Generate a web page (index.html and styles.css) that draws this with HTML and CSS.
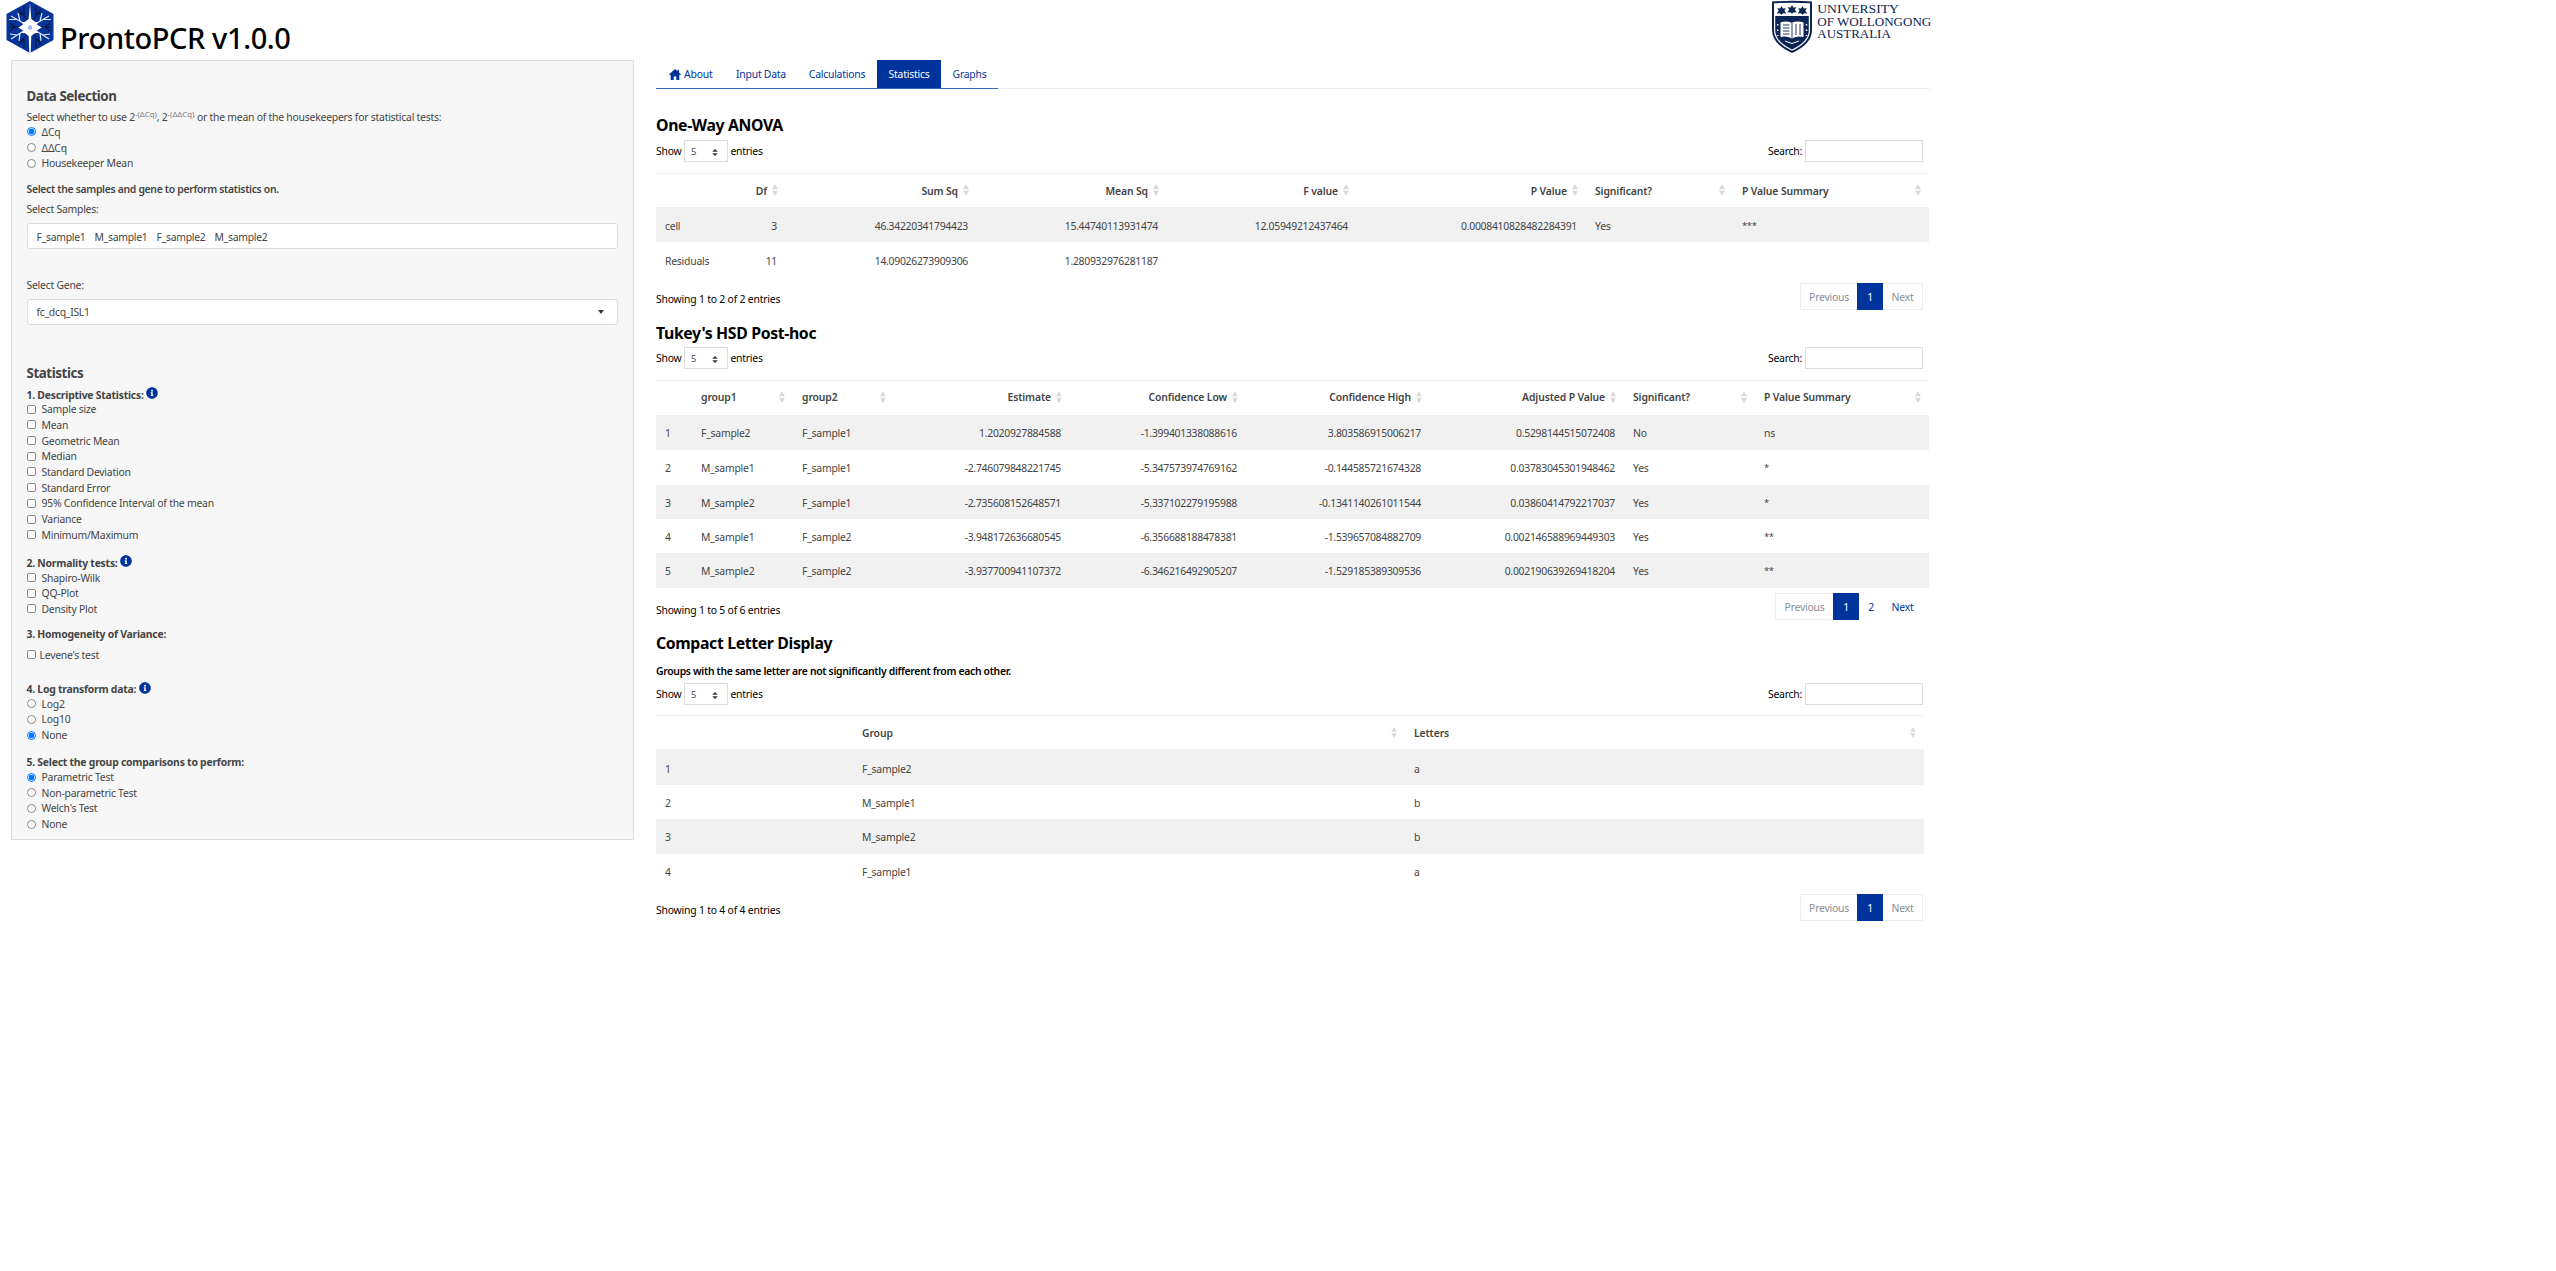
FILE: index.html
```html
<!DOCTYPE html>
<html lang="en">
<head>
<meta charset="utf-8">
<title>ProntoPCR v1.0.0</title>
<link rel="stylesheet" href="styles.css">
</head>
<body>
<svg class="defs" width="0" height="0">
  <symbol id="info" viewBox="0 0 512 512"><path fill="#00349c" d="M256 8C119 8 8 119 8 256s111 248 248 248 248-111 248-248S393 8 256 8zm0 110a42 42 0 1 1 0 84 42 42 0 0 1 0-84zm56 254a12 12 0 0 1-12 12h-88a12 12 0 0 1-12-12v-24a12 12 0 0 1 12-12h12v-64h-12a12 12 0 0 1-12-12v-24a12 12 0 0 1 12-12h64a12 12 0 0 1 12 12v100h12a12 12 0 0 1 12 12z"/></symbol>
  <symbol id="sort" viewBox="0 0 6 12"><path fill="#dadada" d="M3 0 6 5.300H0zM0 6.700h6L3 12z"/></symbol>
  <symbol id="updown" viewBox="0 0 4 5"><path fill="#343a40" d="M2 0 0 2h4zM0 3h4L2 5z"/></symbol>
</svg>
<div class="page">
  <header class="top">
    <svg class="logo" width="48" height="54" viewBox="0 0 48 54">
      <path fill="#06349a" d="M24 1 47.5 14v26L24 53 .5 40V14z"/>
      <g fill="none" stroke="#0a1440" stroke-width="1.1">
        <path d="M21 20 13 9M17 14l-5-1M18 16V6M27 20l8-11M31 14l5-1M30 16V6M16 27H3M9 27l-5-4M9 27l-5 4M32 27h13M39 27l5-4M39 27l5 4M21 34l-8 11M17 40l-6 1M18 39v9M27 34l8 11M31 40l6 1M30 39v9"/>
      </g>
      <g fill="none" stroke="#dfe9fa" stroke-width="1.2">
        <path d="M24 27 5 16M24 27l19-11M24 27 5 39M24 27l19 12M14 21l-2-8M11 19.500H3M34 21l2-8M37 19.500h8M14 33l-1 8M11 35l-7-1M34 33l1 8M37 35l7-1"/>
      </g>
      <path fill="#fff" d="M24 3l1.300 16 4 3 3 0-1.500 2.500 5 3-5 3 1.500 2.500-3 0-4 3L24.700 53h-1.400L22.700 36l-4-3-3 0 1.500-2.500-5-3 5-3L15.700 22l3 0 4-3z"/>
      <circle cx="24" cy="27.500" r="1.700" fill="#b8cdf0" stroke="#4a78c8" stroke-width=".6"/>
    </svg>
    <h1>ProntoPCR v1.0.0</h1>
    <svg class="uow" width="162" height="54" viewBox="0 0 162 54">
      <path fill="#0b2453" d="M0 1.500Q20 .2 40 1.500V30q0 14-20 23Q0 44 0 30z"/>
      <path fill="#fff" d="M2 3.300Q20 2 38 3.300V30q0 12.500-18 20.800Q2 42.500 2 30z"/>
      <path fill="#0b2453" d="M3.200 16h33.600v14q0 11.500-16.800 19.500Q3.200 41.500 3.200 30z"/>
      <g fill="#0b2453">
        <path id="leaf" d="M9.500 6l1.300 2.600 3-.4-1.500 2.600 2 2.700-3-.2-1.800 1.500-1.800-1.500-3 .2 2-2.700-1.500-2.600 3 .4z"/>
        <use href="#leaf" x="10.500" y="-1"/><use href="#leaf" x="21"/>
      </g>
      <path fill="#fff" d="M8.500 22.500q6-2 11 .3 5.500-2.300 12-.3V37q-6-1.500-11.500 1.500Q14.500 35.500 8.500 37z"/>
      <path fill="none" stroke="#0b2453" stroke-width=".9" d="M20 23v15M11 25h6.500M11 28h6.500M11 31h6.500M11 34h6.500M24 24v11M28 24v11"/>
      <path fill="none" stroke="#fff" stroke-width="1.500" stroke-dasharray="1.500 4" d="M5.700 24v12M34.500 24v12"/>
      <path fill="none" stroke="#fff" d="M13 41l7 2.500 7-2.500"/>
      <g font-family="'Liberation Serif', serif" font-size="13.300" letter-spacing="0" fill="#0b2453">
        <text x="45.300" y="12.600" textLength="81.500" lengthAdjust="spacingAndGlyphs">UNIVERSITY</text>
        <text x="45.300" y="25.700" textLength="114" lengthAdjust="spacingAndGlyphs">OF WOLLONGONG</text>
        <text x="45.300" y="38.400" textLength="73.500" lengthAdjust="spacingAndGlyphs">AUSTRALIA</text>
      </g>
    </svg>
  </header>

  <div class="cols">
    <aside class="side">
      <h3>Data Selection</h3>
      <p class="lead">Select whether to use 2<sup>-(ΔCq)</sup>, 2<sup>-(ΔΔCq)</sup> or the mean of the housekeepers for statistical tests:</p>
      <div class="opts">
        <label><i class="radio on"></i>ΔCq</label>
        <label><i class="radio"></i>ΔΔCq</label>
        <label><i class="radio"></i>Housekeeper Mean</label>
      </div>
      <p class="strong samples">Select the samples and gene to perform statistics on.</p>
      <p class="lbl">Select Samples:</p>
      <div class="box"><span>F_sample1</span><span>M_sample1</span><span>F_sample2</span><span>M_sample2</span></div>
      <p class="lbl gene">Select Gene:</p>
      <div class="box"><span>fc_dcq_ISL1</span><i class="caret"></i></div>
      <h3 class="stats">Statistics</h3>
      <h4>1. Descriptive Statistics:<svg class="info"><use href="#info"/></svg></h4>
      <div class="opts">
        <label><i class="check"></i>Sample size</label>
        <label><i class="check"></i>Mean</label>
        <label><i class="check"></i>Geometric Mean</label>
        <label><i class="check"></i>Median</label>
        <label><i class="check"></i>Standard Deviation</label>
        <label><i class="check"></i>Standard Error</label>
        <label><i class="check"></i>95% Confidence Interval of the mean</label>
        <label><i class="check"></i>Variance</label>
        <label><i class="check"></i>Minimum/Maximum</label>
      </div>
      <h4 class="g2">2. Normality tests:<svg class="info"><use href="#info"/></svg></h4>
      <div class="opts">
        <label><i class="check"></i>Shapiro-Wilk</label>
        <label><i class="check"></i>QQ-Plot</label>
        <label><i class="check"></i>Density Plot</label>
      </div>
      <h4 class="g3">3. Homogeneity of Variance:</h4>
      <div class="opts single"><label><i class="check"></i>Levene's test</label></div>
      <h4 class="g4">4. Log transform data:<svg class="info"><use href="#info"/></svg></h4>
      <div class="opts">
        <label><i class="radio"></i>Log2</label>
        <label><i class="radio"></i>Log10</label>
        <label><i class="radio on"></i>None</label>
      </div>
      <h4 class="g5">5. Select the group comparisons to perform:</h4>
      <div class="opts last">
        <label><i class="radio on"></i>Parametric Test</label>
        <label><i class="radio"></i>Non-parametric Test</label>
        <label><i class="radio"></i>Welch's Test</label>
        <label><i class="radio"></i>None</label>
      </div>
    </aside>

    <main>
      <nav class="tabs">
        <a class="t1"><svg width="12" height="11" viewBox="0 0 12 11"><path fill="#00349c" d="M6 0 0 5.400l.8.900L1.700 5.500V11H4.700V7.400h2.600V11h3V5.500l.9.800.8-.9-2-1.800V.8H8.500v1.500z"/></svg>About</a>
        <a class="t2">Input Data</a>
        <a class="t3">Calculations</a>
        <a class="t4 active">Statistics</a>
        <a class="t5">Graphs</a>
      </nav>

      <section class="anova">
        <h2>One-Way ANOVA</h2>
        <div class="tools"><span>Show</span><span class="sel">5<svg width="6" height="7"><use href="#updown"/></svg></span><span>entries</span><span class="search">Search:</span><span class="field"></span></div>
        <table>
          <colgroup><col class="a0"><col class="a1"><col class="a2"><col class="a3"><col class="a4"><col class="a5"><col class="a6"><col class="a7"></colgroup>
          <thead><tr><th></th>
            <th class="n">Df<svg class="sort"><use href="#sort"/></svg></th>
            <th class="n">Sum Sq<svg class="sort"><use href="#sort"/></svg></th>
            <th class="n">Mean Sq<svg class="sort"><use href="#sort"/></svg></th>
            <th class="n">F value<svg class="sort"><use href="#sort"/></svg></th>
            <th class="n">P Value<svg class="sort"><use href="#sort"/></svg></th>
            <th>Significant?<svg class="sort"><use href="#sort"/></svg></th>
            <th>P Value Summary<svg class="sort"><use href="#sort"/></svg></th></tr></thead>
          <tbody>
            <tr><td>cell</td><td class="n">3</td><td class="n">46.34220341794423</td><td class="n">15.44740113931474</td><td class="n">12.05949212437464</td><td class="n">0.0008410828482284391</td><td>Yes</td><td class="stars">***</td></tr>
            <tr><td>Residuals</td><td class="n">11</td><td class="n">14.09026273909306</td><td class="n">1.280932976281187</td><td></td><td></td><td></td><td></td></tr>
          </tbody>
        </table>
        <div class="foot"><span>Showing 1 to 2 of 2 entries</span><div class="pager"><b class="prev">Previous</b><b class="cur">1</b><b class="next">Next</b></div></div>
      </section>

      <section class="tukey">
        <h2>Tukey's HSD Post-hoc</h2>
        <div class="tools"><span>Show</span><span class="sel">5<svg width="6" height="7"><use href="#updown"/></svg></span><span>entries</span><span class="search">Search:</span><span class="field"></span></div>
        <table>
          <colgroup><col class="b0"><col class="b1"><col class="b2"><col class="b3"><col class="b4"><col class="b5"><col class="b6"><col class="b7"><col class="b8"></colgroup>
          <thead><tr><th></th>
            <th>group1<svg class="sort"><use href="#sort"/></svg></th>
            <th>group2<svg class="sort"><use href="#sort"/></svg></th>
            <th class="n">Estimate<svg class="sort"><use href="#sort"/></svg></th>
            <th class="n">Confidence Low<svg class="sort"><use href="#sort"/></svg></th>
            <th class="n">Confidence High<svg class="sort"><use href="#sort"/></svg></th>
            <th class="n">Adjusted P Value<svg class="sort"><use href="#sort"/></svg></th>
            <th>Significant?<svg class="sort"><use href="#sort"/></svg></th>
            <th>P Value Summary<svg class="sort"><use href="#sort"/></svg></th></tr></thead>
          <tbody>
            <tr><td>1</td><td>F_sample2</td><td>F_sample1</td><td class="n">1.2020927884588</td><td class="n">-1.399401338088616</td><td class="n">3.803586915006217</td><td class="n">0.5298144515072408</td><td>No</td><td>ns</td></tr>
            <tr><td>2</td><td>M_sample1</td><td>F_sample1</td><td class="n">-2.746079848221745</td><td class="n">-5.347573974769162</td><td class="n">-0.144585721674328</td><td class="n">0.03783045301948462</td><td>Yes</td><td class="stars">*</td></tr>
            <tr><td>3</td><td>M_sample2</td><td>F_sample1</td><td class="n">-2.735608152648571</td><td class="n">-5.337102279195988</td><td class="n">-0.1341140261011544</td><td class="n">0.03860414792217037</td><td>Yes</td><td class="stars">*</td></tr>
            <tr><td>4</td><td>M_sample1</td><td>F_sample2</td><td class="n">-3.948172636680545</td><td class="n">-6.356688188478381</td><td class="n">-1.539657084882709</td><td class="n">0.002146588969449303</td><td>Yes</td><td class="stars">**</td></tr>
            <tr><td>5</td><td>M_sample2</td><td>F_sample2</td><td class="n">-3.937700941107372</td><td class="n">-6.346216492905207</td><td class="n">-1.529185389309536</td><td class="n">0.002190639269418204</td><td>Yes</td><td class="stars">**</td></tr>
          </tbody>
        </table>
        <div class="foot"><span>Showing 1 to 5 of 6 entries</span><div class="pager"><b class="prev wide">Previous</b><b class="cur">1</b><b class="pg">2</b><b class="next link">Next</b></div></div>
      </section>

      <section class="cld">
        <h2>Compact Letter Display</h2>
        <p class="strong note">Groups with the same letter are not significantly different from each other.</p>
        <div class="tools"><span>Show</span><span class="sel">5<svg width="6" height="7"><use href="#updown"/></svg></span><span>entries</span><span class="search">Search:</span><span class="field"></span></div>
        <table>
          <colgroup><col class="c0"><col class="c1"><col class="c2"></colgroup>
          <thead><tr><th></th>
            <th>Group<svg class="sort tight"><use href="#sort"/></svg></th>
            <th>Letters<svg class="sort tight"><use href="#sort"/></svg></th></tr></thead>
          <tbody>
            <tr><td>1</td><td>F_sample2</td><td>a</td></tr>
            <tr><td>2</td><td>M_sample1</td><td>b</td></tr>
            <tr><td>3</td><td>M_sample2</td><td>b</td></tr>
            <tr><td>4</td><td>F_sample1</td><td>a</td></tr>
          </tbody>
        </table>
        <div class="foot"><span>Showing 1 to 4 of 4 entries</span><div class="pager"><b class="prev">Previous</b><b class="cur">1</b><b class="next">Next</b></div></div>
      </section>
    </main>
  </div>
</div>
</body>
</html>
```
FILE: styles.css
```css
* { box-sizing: border-box; }
body { margin: 0; background: #fff; color: #000; font: 10.4px/16px "Noto Sans", "Open Sans", sans-serif; letter-spacing: -0.23px; }
h1, h2, h3, h4, p { margin: 0; }
svg { display: block; flex: none; }
.defs { position: absolute; }
.page { width: 1934px; }

.top { display: flex; align-items: flex-start; height: 60px; padding-left: 6px; }
.uow { overflow: visible; }
h1 { font-size: 29px; font-weight: 500; line-height: 38px; letter-spacing: -0.4px; margin: 19px auto 0 6px; }

.cols { display: flex; align-items: flex-start; }
.side { width: 623px; height: 780px; margin-left: 11px; padding: 26px 15px 0 14.500px; background: #f7f7f7; border: 1px solid #ddd; color: #444; }
h3 { font-size: 13.300px; font-weight: 700; line-height: 18px; letter-spacing: -0.4px; }
h4 { display: flex; align-items: center; height: 16px; font-size: 10.400px; font-weight: 700; line-height: 16px; }
.info { width: 12px; height: 12px; margin: -3px 0 0 2.500px; }
.lead { margin-top: 4px; height: 16px; white-space: nowrap; }
sup { font-size: 7.800px; line-height: 0; vertical-align: 4px; color: #777; letter-spacing: 0; }
.opts label { display: flex; align-items: center; height: 15.700px; }
.lead + .opts { margin-top: -1px; }
.radio, .check { flex: none; width: 9px; height: 9px; margin-right: 6px; background: #fff; border: 1px solid #888; }
.radio { border-radius: 50%; }
.check { border-radius: 2px; }
.radio.on { border-color: #0075ff; background: radial-gradient(circle, #0075ff 2.500px, #fff 3.200px); }
.strong { font-weight: 600; letter-spacing: -0.31px; }
.samples { margin-top: 10px; }
.lbl { margin-top: 4px; }
.gene { margin-top: 27.500px; }
.box { display: flex; align-items: center; height: 26px; margin-top: 6px; padding: 1px 13px 0 9px; background: #fff; border: 1px solid #ddd; border-radius: 3px; }
.box span { margin-right: 9px; letter-spacing: -0.27px; }
.caret { margin-left: auto; border: solid transparent; border-width: 4px 3.500px 0; border-top-color: #343a40; }
.stats { margin-top: 39px; }
.stats + h4 { margin-top: 5px; }
h4 + .opts { margin-top: -1.200px; }
.g2 { margin-top: 12.400px; }
.g3 { margin-top: 9.500px; }
.g3 + .single { margin-top: 5px; }
.single .check { margin: -2px 4px 0 0; }
.g4 { margin-top: 18px; }
.g5 { margin-top: 11.300px; }
.g5 + .last { margin-top: -1px; }

main { width: 1274px; margin-left: 22px; }
.tabs { display: flex; height: 29px; border-bottom: 1px solid #eee; }
.tabs a { display: flex; align-items: center; justify-content: center; height: 29px; color: #00349c; border-bottom: 1px solid #3e66b8; }
.tabs svg { margin-right: 3.500px; }
.tabs .active { background: #00349c; color: #fff; }
.t1 { width: 69px; } .t2 { width: 72px; } .t3 { width: 80px; } .t4 { width: 64px; } .t5 { width: 57px; }

section { width: 1273px; }
.anova { padding-top: 26px; }
.tukey { padding-top: 13px; }
.cld { padding-top: 12px; }
h2 { font-size: 15.800px; font-weight: 700; line-height: 20px; letter-spacing: -0.35px; margin-bottom: 4px; }
.anova h2 { margin-bottom: 5px; }
.note { margin: 10px 0 4px; }
.tools { display: flex; align-items: center; height: 22px; margin-bottom: 11px; padding-right: 6px; }
.sel { display: flex; align-items: center; width: 44px; height: 22px; margin: 0 2.500px; padding: 2px 9px 0 6px; border: 1px solid #ddd; color: #495057; font-size: 9.500px; }
.sel svg { margin-left: auto; }
.search { margin-left: auto; }
.field { width: 118px; height: 22px; margin-left: 3px; border: 1px solid #ddd; }

table { width: 100%; table-layout: fixed; border-collapse: separate; border-spacing: 0; color: #444; }
th { position: relative; height: 34px; padding: 0 19px 0 9px; border-top: 1px solid #f1f1f1; text-align: left; font-weight: 600; letter-spacing: -0.12px; }
td { height: 35px; padding: 2px 9px 0; text-align: left; }
th.n, td.n { text-align: right; }
td.n { letter-spacing: -0.27px; }
td.stars { font-size: 9.500px; letter-spacing: -0.4px; }
tbody tr:nth-child(odd) { background: #f1f1f1; }
.sort { position: absolute; right: 8px; top: 10px; width: 6px; height: 12px; }
.sort.tight { height: 11px; top: 11px; }
.tukey th { height: 35px; padding-bottom: 2px; }
.tukey td { padding-top: 1px; }
.tukey tr:nth-child(3) td, .tukey tr:nth-child(4) td { height: 34px; }
.cld .tools { margin-bottom: 10px; }
.cld table { width: 1268px; }
.cld th { padding-top: 1px; }
.cld td { padding-top: 1px; }
.cld tbody tr:nth-child(2) td, .cld tbody tr:nth-child(4) td { height: 34px; }
.cld tbody tr:first-child td { height: 36px; padding-top: 3px; }
.a0 { width: 61px; } .a1 { width: 69px; } .a2 { width: 191px; } .a3 { width: 190px; } .a4 { width: 190px; } .a5 { width: 229px; } .a6 { width: 147px; }
.b0 { width: 36px; } .b1 { width: 101px; } .b2 { width: 101px; } .b3 { width: 176px; } .b4 { width: 176px; } .b5 { width: 184px; } .b6 { width: 194px; } .b7 { width: 131px; }
.c0 { width: 197px; } .c1 { width: 552px; }

.foot { display: flex; justify-content: space-between; height: 33px; padding: 6px 6px 0 0; }
.foot > span { margin-top: 8px; letter-spacing: -0.2px; }
.pager { display: flex; height: 27px; line-height: 27px; text-align: center; color: #868e96; }
.tukey .pager { margin-top: -1px; }
.pager b { font-weight: 400; border: 1px solid #eee; line-height: 26px; }
.pager .prev { width: 57px; border-right: 0; }
.pager .wide { width: 58px; }
.pager .cur { width: 26px; color: #fff; background: #00349c; border-color: #00349c; }
.pager .next { width: 40px; border-left: 0; }
.pager .pg { width: 24px; border-color: transparent; color: #00349c; }
.pager .link { border-color: transparent; color: #00349c; }
```
